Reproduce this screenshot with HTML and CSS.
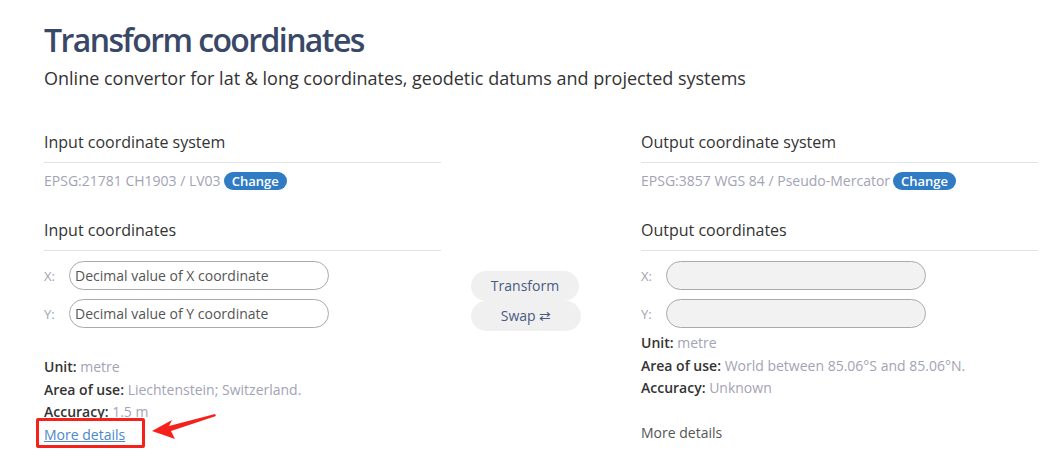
FILE: index.html
```html
<!DOCTYPE html>
<html>
<head>
<meta charset="utf-8">
<link rel="stylesheet" href="styles.css">
</head>
<body>
<div class="page">
  <h1 class="title">Transform coordinates</h1>
  <p class="subtitle">Online convertor for lat &amp; long coordinates, geodetic datums and projected systems</p>
  <div class="grid">
    <div class="col">
      <h2 class="heading">Input coordinate system</h2>
      <div class="crs"><span class="crs-name">EPSG:21781 CH1903 / LV03</span> <span class="change">Change</span></div>
      <h2 class="heading heading2">Input coordinates</h2>
      <div class="fields">
        <div class="field"><span class="lbl">X:</span><input class="inp" placeholder="Decimal value of X coordinate"></div>
        <div class="field"><span class="lbl">Y:</span><input class="inp" placeholder="Decimal value of Y coordinate"></div>
      </div>
      <div class="info info-left">
        <div><b>Unit:</b> <span class="val">metre</span></div>
        <div><b>Area of use:</b> <span class="val">Liechtenstein; Switzerland.</span></div>
        <div><b>Accuracy:</b> <span class="val">1.5 m</span></div>
        <div><a class="more-link" href="#">More details</a></div>
      </div>
    </div>
    <div class="mid">
      <span class="btn btn-t">Transform</span>
      <span class="btn btn-s">Swap ⇄</span>
    </div>
    <div class="col">
      <h2 class="heading">Output coordinate system</h2>
      <div class="crs"><span class="crs-name">EPSG:3857 WGS 84 / Pseudo-Mercator</span> <span class="change">Change</span></div>
      <h2 class="heading heading2">Output coordinates</h2>
      <div class="fields">
        <div class="field"><span class="lbl">X:</span><input class="inp out" disabled></div>
        <div class="field"><span class="lbl">Y:</span><input class="inp out" disabled></div>
      </div>
      <div class="info">
        <div><b>Unit:</b> <span class="val">metre</span></div>
        <div><b>Area of use:</b> <span class="val">World between 85.06°S and 85.06°N.</span></div>
        <div><b>Accuracy:</b> <span class="val">Unknown</span></div>
        <div class="more-plain">More details</div>
      </div>
    </div>
  </div>
</div>
<div class="redbox"></div>
<svg class="arrow" width="80" height="30" viewBox="0 0 80 30">
  <polygon points="2,17 22,6 19,12 65,0 66,2 21,17 25,25" fill="#f5221b"/>
</svg>
</body>
</html>
```
FILE: styles.css
```css
html, body { margin: 0; padding: 0; background: #fff; }
body { font-family: "Open Sans", "Liberation Sans", sans-serif; color: #333; position: relative; width: 1048px; height: 467px; overflow: hidden; }
.page { padding: 20px 0 0 44px; }
.title { margin: 0; font-size: 32px; line-height: 40px; font-weight: 600; letter-spacing: -1.6px; color: #3a4868; }
.subtitle { margin: 6px 0 0; font-size: 18px; line-height: 24px; color: #333; }
.grid { display: grid; grid-template-columns: 397px 200px 397px; margin-top: 41px; }
.heading { margin: 0; font-size: 16px; font-weight: 400; line-height: 22px; padding-bottom: 9px; border-bottom: 1px solid #e3e3e3; color: #333; }
.heading2 { margin-top: 29px; }
.crs { margin-top: 9px; font-size: 14px; line-height: 18px; display: flex; align-items: center; gap: 3px; }
.crs-name { color: #a3a3b5; }
.change { background: #2f7bc4; color: #fff; font-size: 13px; font-weight: 600; border-radius: 9px; padding: 0 8px; line-height: 18px; }
.fields { margin-top: 10px; display: flex; flex-direction: column; gap: 9px; }
.field { display: flex; align-items: center; }
.lbl { width: 25px; font-size: 13px; color: #a3a3b5; }
.inp { box-sizing: border-box; width: 260px; height: 29px; border: 1px solid #aaa; border-radius: 15px; padding: 0 5px; font-family: "Open Sans", sans-serif; font-size: 14px; background: #fff; outline: none; }
.inp::placeholder { color: #555; }
.inp.out { background: #f2f2f2; }
.info { margin-top: 4px; font-size: 14px; line-height: 22.5px; }
.info b { font-weight: 600; color: #333; }
.val { color: #a3a3b5; }
.info-left { margin-top: 28px; }
.more-link { color: #4a88cc; text-decoration: underline; }
.more-plain { margin-top: 22.5px; color: #555; }
.mid { display: flex; flex-direction: column; align-items: flex-start; padding: 140px 0 0 30px; }
.btn { background: #f0f0f0; color: #4b5a80; font-size: 14px; border-radius: 15px; height: 30px; line-height: 30px; text-align: center; }
.btn-t { width: 108px; }
.btn-s { width: 110px; }
.redbox { position: absolute; left: 36px; top: 418px; width: 103px; height: 24px; border: 3px solid #f5221b; border-radius: 2px; }
.arrow { position: absolute; left: 150px; top: 414px; }
```
